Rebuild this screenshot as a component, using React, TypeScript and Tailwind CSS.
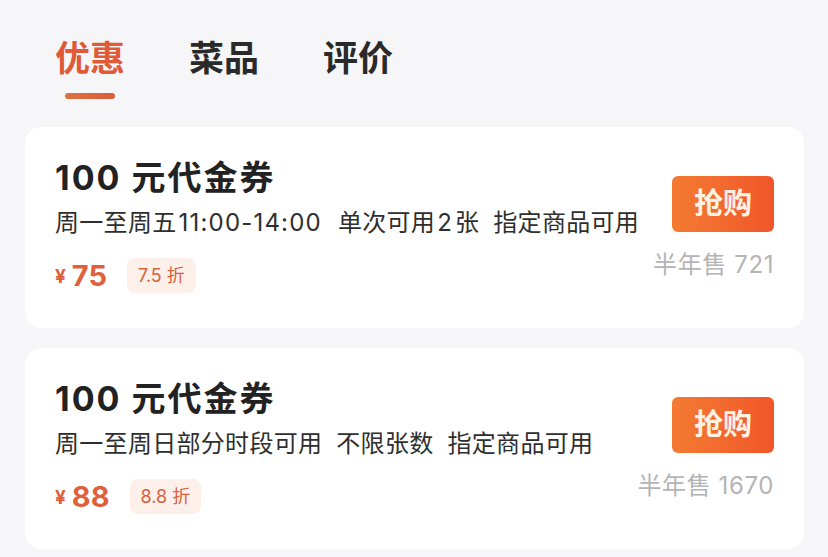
import React from "react";

const FONT = { fontFamily: 'Inter, "Noto Sans CJK SC", "Noto Sans", sans-serif' };

type Coupon = {
  title: string;
  parts: string[];
  price: string;
  discount: string;
  sold: string;
};

const coupons: Coupon[] = [
  {
    title: "100 元代金券",
    parts: ["周一至周五11:00-14:00", "单次可用2张", "指定商品可用"],
    price: "75",
    discount: "7.5 折",
    sold: "半年售 721",
  },
  {
    title: "100 元代金券",
    parts: ["周一至周日部分时段可用", "不限张数", "指定商品可用"],
    price: "88",
    discount: "8.8 折",
    sold: "半年售 1670",
  },
];

function Mixed({ text }: { text: string }) {
  const runs = text.match(/[\x00-\x7F]+|[^\x00-\x7F]+/g) || [];
  return (
    <span className="tracking-[0.3px]">
      {runs.map((r, i) =>
        /^[\x00-\x7F]+$/.test(r) ? (
          <span key={i} className="tracking-[1.2px] px-[2px]">
            {r}
          </span>
        ) : (
          <span key={i}>{r}</span>
        )
      )}
    </span>
  );
}

function CouponCard({ c }: { c: Coupon }) {
  return (
    <div className="flex justify-between rounded-[16px] bg-white pl-[30px] pr-[30px] pt-[31px] pb-[35px]">
      <div className="flex flex-col">
        <div className="text-[34px] leading-[40px] font-bold tracking-[2px] text-[#222222]">{c.title}</div>
        <div className="mt-[10px] flex gap-[14px] text-[24px] leading-[30px] text-[#2e2e2e]">
          {c.parts.map((p) => (
            <Mixed key={p} text={p} />
          ))}
        </div>
        <div className="mt-[19px] flex h-[36px] items-center">
          <span className="text-[19px] font-bold text-[#e0603a] mr-[6px] mt-[4px]">¥</span>
          <span className="text-[29px] font-bold leading-none text-[#e0603a]">{c.price}</span>
          <span className="ml-[20px] flex h-[35px] items-center rounded-[8px] bg-[#fdf0ea] px-[11px] text-[18px] text-[#d8603c]">
            {c.discount}
          </span>
        </div>
      </div>
      <div className="mt-[18px] flex flex-col items-end">
        <div className="flex h-[56px] w-[102px] items-center justify-center rounded-[6px] bg-gradient-to-r from-[#f47b32] to-[#f0552a] text-[29px] font-bold text-[#fff2e2]">
          抢购
        </div>
        <div className="mt-[18px] text-[24px] leading-[30px] tracking-[0.6px] text-[#b4b4b6]">{c.sold}</div>
      </div>
    </div>
  );
}

export default function App() {
  return (
    <div className="h-[557px] w-[828px] overflow-hidden bg-[#f6f6f8] pl-[25px] pr-[24px]" style={FONT}>
      <div className="flex gap-[64px] pl-[30px] pt-[36px]">
        <div className="flex flex-col items-center">
          <span className="text-[35px] leading-[44px] font-bold text-[#e05a38]">优惠</span>
          <span className="mt-[13px] h-[6px] w-[50px] rounded-full bg-gradient-to-r from-[#dc7242] to-[#dc5a38]" />
        </div>
        <span className="text-[35px] leading-[44px] font-bold text-[#2a2a2a]">菜品</span>
        <span className="text-[35px] leading-[44px] font-bold text-[#2a2a2a]">评价</span>
      </div>
      <div className="mt-[28px] flex flex-col gap-[20px]">
        {coupons.map((c, i) => (
          <CouponCard key={i} c={c} />
        ))}
      </div>
    </div>
  );
}
